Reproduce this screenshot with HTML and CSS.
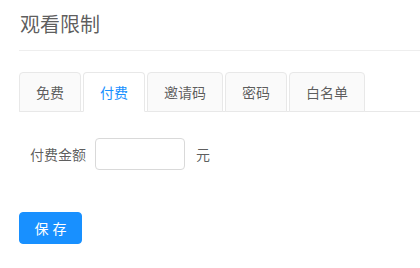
FILE: index.html
```html
<!DOCTYPE html>
<html lang="zh">
<head>
<meta charset="utf-8">
<title>观看限制</title>
<link rel="stylesheet" href="styles.css">
</head>
<body>
<div class="page">
  <div class="header">观看限制</div>
  <div class="tabs">
    <div class="tab">免费</div>
    <div class="tab active">付费</div>
    <div class="tab">邀请码</div>
    <div class="tab">密码</div>
    <div class="tab">白名单</div>
  </div>
  <div class="form-row">
    <label class="label" for="price">付费金额</label>
    <input class="input" id="price" type="text">
    <span class="unit">元</span>
  </div>
  <div class="actions">
    <button class="btn" type="button"><span>保存</span></button>
  </div>
</div>
</body>
</html>
```

FILE: styles.css
```css
html, body {
  margin: 0;
  padding: 0;
  background: #fff;
}
body {
  font-family: "Noto Sans CJK SC", "Noto Sans", sans-serif;
  font-size: 14px;
  color: rgba(0, 0, 0, 0.65);
}
.page {
  padding-left: 19px;
}
.header {
  padding: 10px 0 12px 1px;
  line-height: 28px;
  font-size: 20px;
  color: rgba(0, 0, 0, 0.65);
  border-bottom: 1px solid #eeeeee;
}
.tabs {
  display: flex;
  margin-top: 21px;
  height: 40px;
  box-sizing: border-box;
  border-bottom: 1px solid #e8e8e8;
}
.tab {
  box-sizing: border-box;
  height: 40px;
  line-height: 38px;
  padding: 0 16px;
  margin-right: 2px;
  background: #fafafa;
  border: 1px solid #e8e8e8;
  border-radius: 4px 4px 0 0;
  color: rgba(0, 0, 0, 0.65);
  cursor: pointer;
}
.tab.active {
  background: #fff;
  color: #1890ff;
  border-bottom-color: #fff;
}
.form-row {
  display: flex;
  align-items: center;
  margin-top: 26px;
  padding-left: 11px;
  height: 32px;
}
.label {
  margin-right: 9px;
  line-height: 32px;
}
.input {
  box-sizing: border-box;
  width: 90px;
  height: 32px;
  border: 1px solid #d9d9d9;
  border-radius: 4px;
  padding: 4px 11px;
  font: inherit;
  outline: none;
}
.unit {
  margin-left: 11px;
}
.actions {
  display: flex;
  margin-top: 42px;
}
.btn {
  box-sizing: border-box;
  height: 32px;
  width: 63px;
  padding: 0;
  white-space: nowrap;
  background: #1890ff;
  border: 1px solid #1890ff;
  border-radius: 4px;
  color: #fff;
  font-family: inherit;
  font-size: 14px;
  line-height: 30px;
  text-align: center;
}
.btn span {
  letter-spacing: 0.3em;
  margin-right: -0.3em;
}
```
